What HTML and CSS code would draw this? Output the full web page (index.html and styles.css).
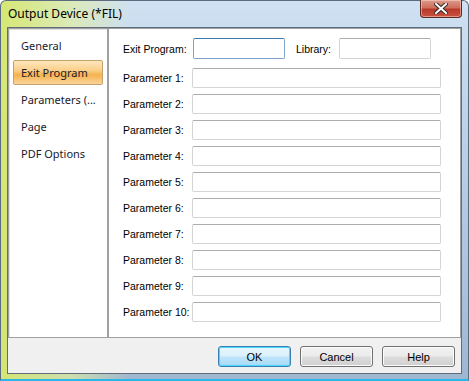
FILE: index.html
```html
<!DOCTYPE html>
<html lang="en">
<head>
    <meta charset="UTF-8">
    <title>Output Device (*FIL)</title>
    <link rel="stylesheet" href="styles.css">
</head>
<body>
    <div class="window">
        <div class="titlebar">
            <span class="title">Output Device (*FIL)</span>
            <button class="close-btn" aria-label="Close">
                <svg width="14" height="11" viewBox="0 0 14 11">
                    <path d="M2 1 L12 10 M12 1 L2 10" stroke="#3a2a28" stroke-width="4" stroke-linecap="square"/>
                    <path d="M2 1 L12 10 M12 1 L2 10" stroke="#ffffff" stroke-width="2" stroke-linecap="square"/>
                </svg>
            </button>
        </div>
        <div class="client">
            <div class="panels">
                <ul class="nav">
                    <li class="nav-item">General</li>
                    <li class="nav-item selected">Exit Program</li>
                    <li class="nav-item">Parameters (...</li>
                    <li class="nav-item">Page</li>
                    <li class="nav-item">PDF Options</li>
                </ul>
                <div class="content">
                    <div class="row first">
                        <label class="lbl" for="exitpgm">Exit Program:</label>
                        <input class="field short focused" id="exitpgm" type="text">
                        <label class="lbl lib" for="library">Library:</label>
                        <input class="field short" id="library" type="text">
                    </div>
                    <div class="row"><label class="lbl">Parameter 1:</label><input class="field" type="text"></div>
                    <div class="row"><label class="lbl">Parameter 2:</label><input class="field" type="text"></div>
                    <div class="row"><label class="lbl">Parameter 3:</label><input class="field" type="text"></div>
                    <div class="row"><label class="lbl">Parameter 4:</label><input class="field" type="text"></div>
                    <div class="row"><label class="lbl">Parameter 5:</label><input class="field" type="text"></div>
                    <div class="row"><label class="lbl">Parameter 6:</label><input class="field" type="text"></div>
                    <div class="row"><label class="lbl">Parameter 7:</label><input class="field" type="text"></div>
                    <div class="row"><label class="lbl">Parameter 8:</label><input class="field" type="text"></div>
                    <div class="row"><label class="lbl">Parameter 9:</label><input class="field" type="text"></div>
                    <div class="row"><label class="lbl">Parameter 10:</label><input class="field" type="text"></div>
                </div>
            </div>
            <div class="footer">
                <button class="btn default">OK</button>
                <button class="btn">Cancel</button>
                <button class="btn">Help</button>
            </div>
        </div>
    </div>
</body>
</html>
```

FILE: styles.css
```css
html, body {
    margin: 0;
    padding: 0;
}

body {
    width: 469px;
    height: 381px;
    overflow: hidden;
    font-family: 'Liberation Sans', Arial, sans-serif;
}

.window {
    width: 469px;
    height: 381px;
    box-sizing: border-box;
    display: flex;
    flex-direction: column;
    background:
        linear-gradient(90deg, rgba(214, 232, 110, 0.95) 0px, rgba(226, 238, 160, 0.7) 70px, rgba(200, 222, 240, 0) 130px),
        linear-gradient(180deg, #cfe1f2 0px, #bcd3ea 120px, #a9c0d9 300px, #9fb6d0 381px);
    border: 1px solid #5b6b80;
    border-radius: 6px 6px 0 0;
    border-bottom: 2px solid #2ab6e8;
}

.titlebar {
    height: 26px;
    display: flex;
    justify-content: space-between;
    align-items: flex-start;
    padding: 0 6px 0 7px;
}

.title {
    font-family: 'Noto Sans', 'Open Sans', sans-serif;
    font-size: 12px;
    color: #000;
    margin-top: 4px;
}

.close-btn {
    width: 42px;
    height: 18px;
    margin-top: -1px;
    border: 1px solid #5d2a22;
    border-top: none;
    border-radius: 0 0 4px 4px;
    background: linear-gradient(180deg, #dc9a8c 0%, #cf6f5e 45%, #b8392a 55%, #c9533f 100%);
    box-shadow: inset 0 0 0 1px rgba(255, 220, 210, 0.5);
    display: flex;
    align-items: center;
    justify-content: center;
    padding: 0;
}

.client {
    flex: 1;
    margin: 0 6px 5px 6px;
    background: #f0f0f0;
    border: 1px solid #626d7c;
    display: flex;
    flex-direction: column;
}

.panels {
    display: flex;
    height: 310px;
}

.nav {
    list-style: none;
    margin: 0;
    padding: 4px 4px 0 4px;
    width: 90px;
    background: #fff;
    border: 1px solid #a0a0a0;
    box-shadow: inset 1px 1px 0 #e3e3e3;
    font-family: 'Noto Sans', 'Open Sans', sans-serif;
    font-size: 11px;
}

.nav-item {
    height: 23px;
    line-height: 23px;
    padding-left: 7px;
    margin-bottom: 2px;
    border: 1px solid transparent;
    border-radius: 2px;
    color: #1a1a2a;
    white-space: nowrap;
}

.nav-item.selected {
    border-color: #c5a26c;
    background: linear-gradient(180deg, #fde6bd 0%, #fbd08a 40%, #f6b24f 60%, #fbd59a 100%);
}

.content {
    flex: 1;
    background: #fff;
    border: 1px solid #a0a0a0;
    padding: 9px 0 0 14px;
    display: flex;
    flex-direction: column;
    gap: 6px;
}

.row {
    display: flex;
    align-items: center;
    height: 20px;
}

.row.first {
    height: 21px;
    margin-bottom: 3px;
}

.lbl {
    width: 69px;
    font-size: 10.5px;
    color: #000;
    white-space: nowrap;
}

.lbl.lib {
    width: auto;
    margin: 0 8px 0 11px;
}

.field {
    box-sizing: border-box;
    width: 249px;
    height: 20px;
    margin: 0;
    border: 1px solid #d4d4d4;
    border-top-color: #acacac;
    border-radius: 2px;
    background: #fff;
    outline: none;
}

.field.short {
    width: 92px;
    height: 21px;
}

.field.focused {
    margin-left: 1px;
    border-color: #7ea4cc;
    border-top-color: #3d7bad;
}

.footer {
    flex: 1;
    display: flex;
    justify-content: flex-end;
    align-items: flex-start;
    padding: 8px 6px 0 0;
    gap: 9px;
}

.btn {
    width: 73px;
    height: 21px;
    font-family: 'Liberation Sans', Arial, sans-serif;
    font-size: 11px;
    color: #000;
    border: 1px solid #707070;
    border-radius: 3px;
    background: linear-gradient(180deg, #f2f2f2 0%, #ebebeb 48%, #dddddd 52%, #cfcfcf 100%);
    box-shadow: inset 0 0 0 1px #fcfcfc;
    padding: 0;
}

.btn.default {
    border-color: #3c7fb1;
    background: linear-gradient(180deg, #eaf6fd 0%, #d9f0fc 48%, #bee6fd 52%, #a7d9f5 100%);
    box-shadow: inset 0 0 0 1px #48d8fb;
}
```
